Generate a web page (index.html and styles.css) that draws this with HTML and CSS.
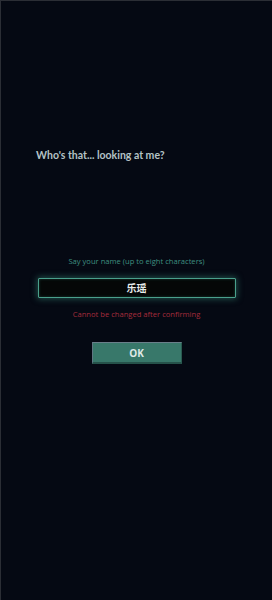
FILE: index.html
```html
<!DOCTYPE html>
<html lang="en">
<head>
  <meta charset="UTF-8">
  <meta name="viewport" content="width=device-width, initial-scale=1.0">
  <title>Name</title>
  <link rel="stylesheet" href="styles.css">
</head>
<body>
  <div class="screen">
    <h1 class="question">Who's that... looking at me?</h1>
    <div class="name-form">
      <p class="hint">Say your name (up to eight characters)</p>
      <div class="name-box">乐瑶</div>
      <p class="warning">Cannot be changed after confirming</p>
      <button class="ok-button">OK</button>
    </div>
  </div>
</body>
</html>
```

FILE: styles.css
```css
body {
  margin: 0;
  background: #060a14;
  font-family: 'Open Sans', 'Noto Sans', 'Noto Sans CJK SC', sans-serif;
}

.screen {
  box-sizing: border-box;
  width: 272px;
  height: 600px;
  border-top: 1px solid #2b2e35;
  border-left: 1px solid #2b2e35;
  background: #050913;
  padding: 148px 0 0 35px;
}

.question {
  margin: 0;
  font-family: Lato, 'Open Sans', sans-serif;
  font-size: 10.5px;
  font-weight: 700;
  color: #b4c2c6;
}

.name-form {
  display: flex;
  flex-direction: column;
  align-items: center;
  margin: 95px 0 0 -35px;
}

.hint {
  margin: 0;
  font-size: 7.6px;
  color: #3f8f80;
}

.name-box {
  box-sizing: border-box;
  width: 198px;
  height: 20px;
  margin: 12px 0 0 0;
  border: 1px solid #4aa08c;
  border-radius: 1px;
  background: #050707;
  box-shadow: 0 0 6px 1px rgba(60, 150, 130, 0.5), inset 0 0 3px rgba(60, 150, 130, 0.35);
  color: #e8ecec;
  font-family: 'Noto Sans CJK SC', sans-serif;
  font-size: 10px;
  font-weight: 700;
  line-height: 18px;
  text-align: center;
}

.warning {
  margin: 11px 0 0 0;
  font-size: 7.6px;
  color: #a52c3c;
}

.ok-button {
  box-sizing: border-box;
  width: 90px;
  height: 22px;
  margin-top: 23px;
  border: none;
  border-top: 1px solid #6a7f8a;
  border-left: 1px solid #5f7682;
  border-bottom: 2px solid #26524a;
  border-right: 1px solid #2a5a50;
  background: #38786a;
  color: #dfe8e6;
  font-family: 'Open Sans', sans-serif;
  font-size: 10px;
  font-weight: 700;
  padding: 0;
}
```
